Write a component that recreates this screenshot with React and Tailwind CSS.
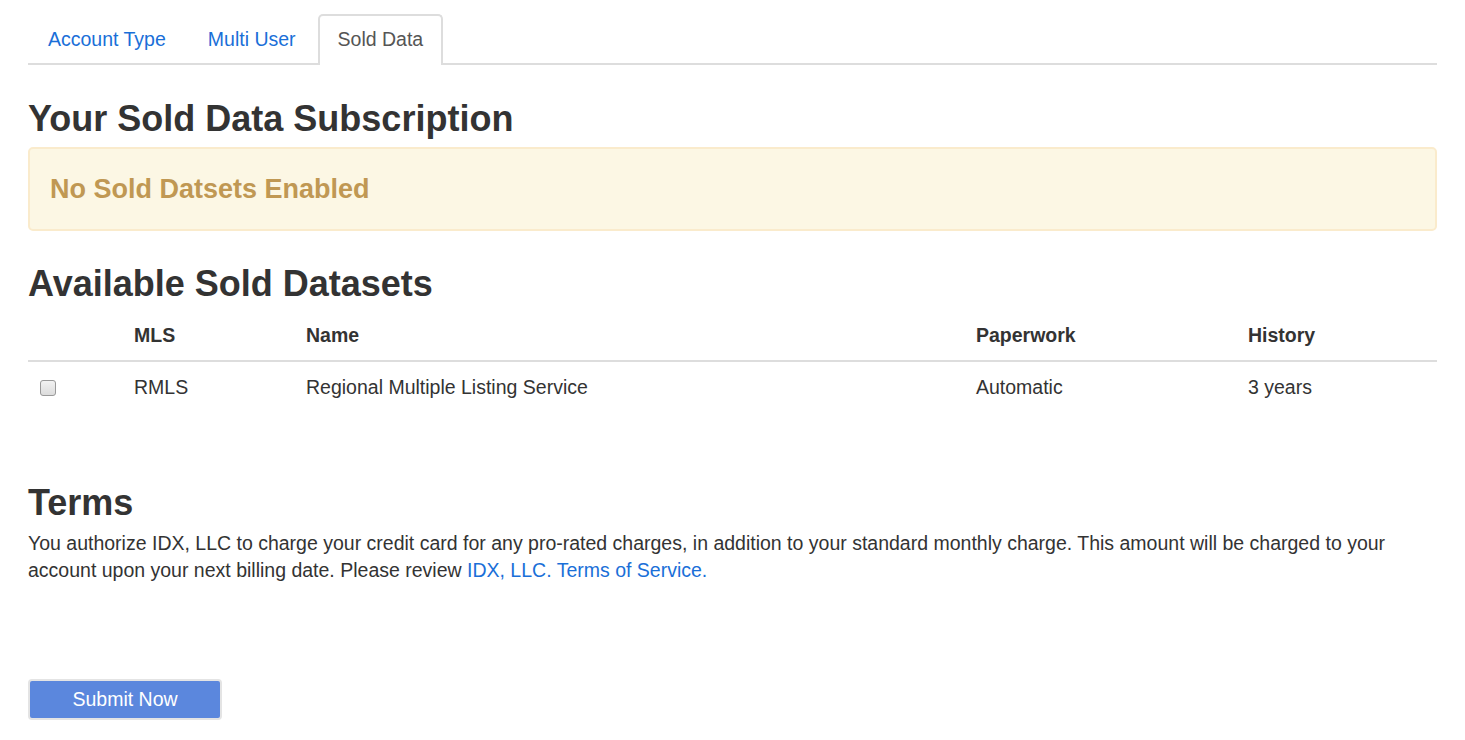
import React from 'react';

const tabs = [
  { label: 'Account Type', active: false },
  { label: 'Multi User', active: false },
  { label: 'Sold Data', active: true },
];

const datasets = [
  { mls: 'RMLS', name: 'Regional Multiple Listing Service', paperwork: 'Automatic', history: '3 years' },
];

export default function App() {
  return (
    <div className="min-h-screen bg-white px-[28px] pt-[14px] text-[#333] text-[19.5px] leading-[27px] font-['Liberation_Sans',Arial,sans-serif]">
      {/* tabs */}
      <ul className="flex gap-[2px] border-b-2 border-[#ddd]">
        {tabs.map((t) =>
          t.active ? (
            <li key={t.label} className="-mb-[2px] rounded-t-[5px] border-2 border-b-0 border-[#ddd] bg-white px-[18px] pt-[10px] pb-[10px] text-[#555]">
              {t.label}
            </li>
          ) : (
            <li key={t.label} className="px-[20px] pt-[12px] pb-[10px] text-[#1a6fd8]">
              {t.label}
            </li>
          )
        )}
      </ul>

      <h2 className="mt-[34px] text-[36px] font-bold leading-[40px]">Your Sold Data Subscription</h2>
      <div className="mt-[8px] rounded-[5px] border-2 border-[#faebcc] bg-[#fcf7e4] px-[20px] py-[24px]">
        <p className="text-[27px] font-bold leading-[32px] text-[#c09853]">No Sold Datsets Enabled</p>
      </div>

      <h2 className="mt-[33px] text-[36px] font-bold leading-[40px]">Available Sold Datasets</h2>
      <table className="mt-[10px] w-full table-fixed border-collapse">
        <colgroup>
          <col className="w-[94px]" />
          <col className="w-[172px]" />
          <col className="w-[670px]" />
          <col className="w-[272px]" />
          <col />
        </colgroup>
        <thead>
          <tr className="border-b-2 border-[#ddd] text-left">
            <th className="px-[12px] pt-[8px] pb-[11px]"></th>
            <th className="px-[12px] pt-[8px] pb-[11px] font-bold">MLS</th>
            <th className="px-[12px] pt-[8px] pb-[11px] font-bold">Name</th>
            <th className="px-[12px] pt-[8px] pb-[11px] font-bold">Paperwork</th>
            <th className="px-[12px] pt-[8px] pb-[11px] font-bold">History</th>
          </tr>
        </thead>
        <tbody>
          {datasets.map((d) => (
            <tr key={d.mls}>
              <td className="px-[12px] py-[12px] align-middle">
                <span className="block h-[16px] w-[16px] rounded-[3px] border border-[#999] bg-gradient-to-b from-[#f2f2f2] to-[#dcdcdc]" />
              </td>
              <td className="px-[12px] py-[12px]">{d.mls}</td>
              <td className="px-[12px] py-[12px]">{d.name}</td>
              <td className="px-[12px] py-[12px]">{d.paperwork}</td>
              <td className="px-[12px] py-[12px]">{d.history}</td>
            </tr>
          ))}
        </tbody>
      </table>

      <h2 className="mt-[70px] text-[36px] font-bold leading-[40px]">Terms</h2>
      <p className="mt-[7px]">
        You authorize IDX, LLC to charge your credit card for any pro-rated charges, in addition to your standard monthly charge. This amount will be charged to your account upon your next billing date. Please review{' '}
        <a className="text-[#1a6fd8]">IDX, LLC. Terms of Service.</a>
      </p>

      <button className="mt-[95px] h-[41px] w-[194px] rounded-[4px] border-2 border-[#e4e4e4] bg-[#5b87dd] text-[19.5px] text-white">
        Submit Now
      </button>
    </div>
  );
}
